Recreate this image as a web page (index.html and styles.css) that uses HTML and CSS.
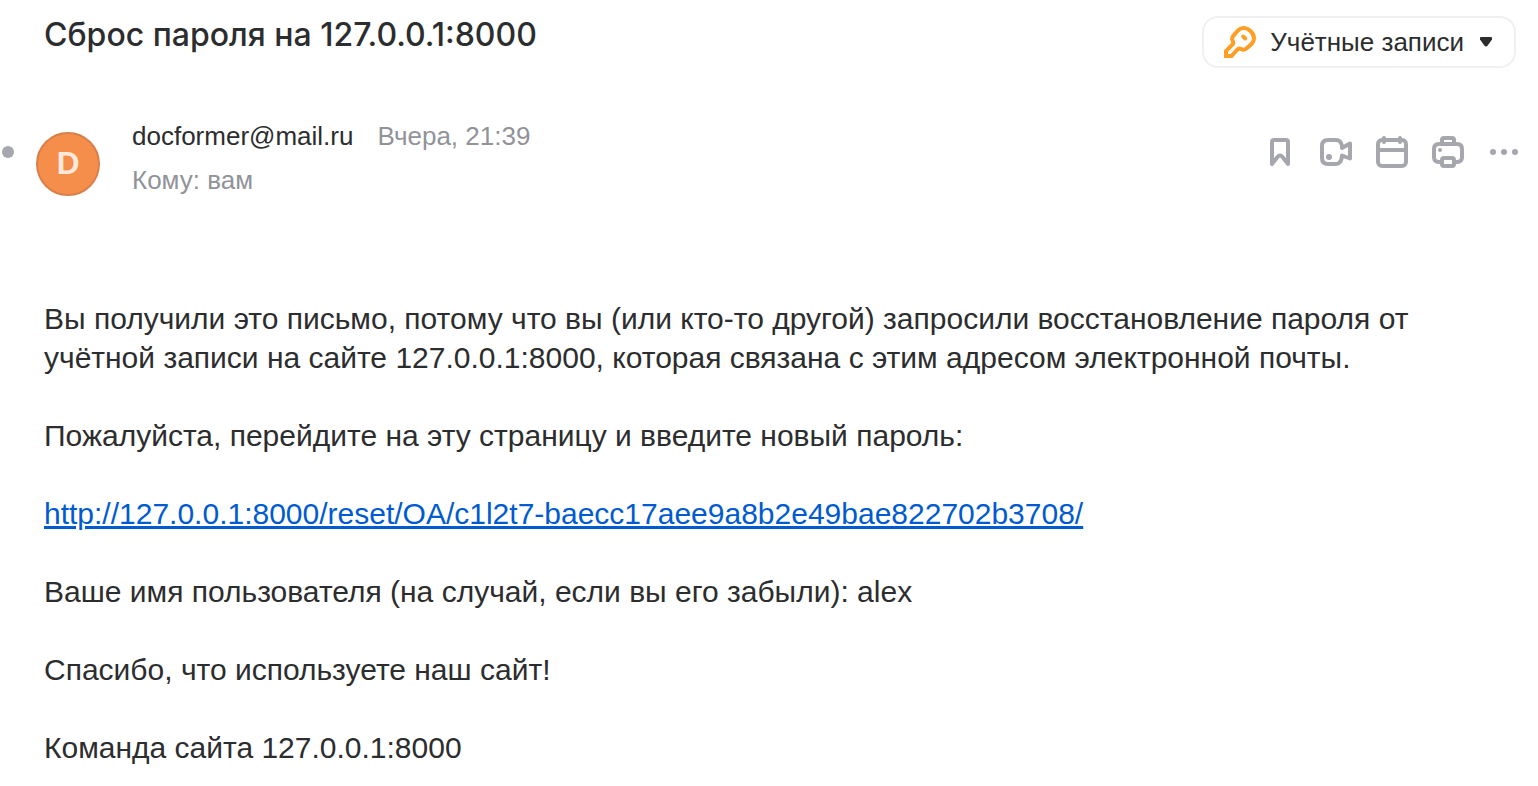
FILE: index.html
```html
<!DOCTYPE html>
<html lang="ru">
<head>
<meta charset="utf-8">
<title>Сброс пароля на 127.0.0.1:8000</title>
<link rel="stylesheet" href="styles.css">
</head>
<body>
<main class="letter">
  <header class="topbar">
    <h1 class="subject">Сброс пароля на 127.0.0.1:8000</h1>
    <button class="category" type="button">
      <svg class="icon" viewBox="0 0 32 32" fill="none" stroke="#ff9e24" stroke-width="4" stroke-linejoin="round" aria-hidden="true">
        <path d="M2 30V25L9 18C9.800 17 9.300 16.300 8.500 14.500C7.800 12.500 8 11 9.500 9.500L14 4.500C17.500 1 22.500 1.200 26.500 5C31 9.500 31 14.500 27 18.500L22.500 22.500C20.500 24 19 24 17 23C15.500 22.300 14.500 22.500 13.500 23.500L7.500 30Z" stroke-linejoin="miter"/>
        <path d="M19.200 10.500L21.200 12.500" stroke-linecap="round"/>
      </svg>
      <span>Учётные записи</span>
      <svg class="caret" viewBox="0 0 12 10" aria-hidden="true"><path d="M1 0H11Q12 0 12 1V2.500L7.500 8.800Q6 10 4.500 8.800L0 2.500V1Q0 0 1 0Z" fill="#2c2d2e"/></svg>
    </button>
  </header>

  <section class="meta">
    <span class="unread"></span>
    <span class="avatar">D</span>
    <div class="people">
      <div class="line"><span class="sender">docformer@mail.ru</span><time class="date">Вчера, 21:39</time></div>
      <div class="line">Кому: вам</div>
    </div>
    <div class="actions">
      <button class="action" type="button" aria-label="Закладка">
        <svg class="icon" viewBox="0 0 32 32" fill="none" stroke="#a5a7ad" stroke-width="4" stroke-linejoin="round"><path d="M8 28V6Q8 4 10 4H22Q24 4 24 6V28L18.500 21Q16 18 13.500 21Z"/></svg>
      </button>
      <button class="action" type="button" aria-label="Видеозвонок">
        <svg class="icon" viewBox="0 0 32 32" fill="none" stroke="#a5a7ad" stroke-width="4" stroke-linejoin="round"><path d="M8 4H16Q21 4 22 10V12L30 7.500V22.500L22 19.500Q21.500 28 16 28H8Q2 28 2 22V10Q2 4 8 4Z"/><circle cx="9" cy="21" r="3" fill="#a5a7ad" stroke="none"/></svg>
      </button>
      <button class="action" type="button" aria-label="Календарь">
        <svg class="icon" viewBox="0 0 32 32" fill="none" stroke="#a5a7ad" stroke-width="4" stroke-linejoin="round"><rect x="2" y="4" width="28" height="26" rx="4"/><path d="M2 14H30"/><path d="M8 2V6M24 2V6" stroke-linecap="round"/></svg>
      </button>
      <button class="action" type="button" aria-label="Печать">
        <svg class="icon" viewBox="0 0 32 32" fill="none" stroke="#a5a7ad" stroke-width="4" stroke-linejoin="round"><path d="M10 8V4Q10 2 12 2H20Q22 2 22 4V8M10 26H7Q2 26 2 21V13Q2 8 7 8H25Q30 8 30 13V21Q30 26 25 26H22"/><rect x="10" y="22" width="12" height="8" rx="2"/><circle cx="8" cy="14" r="2" fill="#a5a7ad" stroke="none"/></svg>
      </button>
      <button class="action" type="button" aria-label="Ещё">
        <svg class="icon" viewBox="0 0 32 32" fill="#a5a7ad"><circle cx="5" cy="16" r="3"/><circle cx="16" cy="16" r="3"/><circle cx="27" cy="16" r="3"/></svg>
      </button>
    </div>
  </section>

  <article class="body">
    <p>Вы получили это письмо, потому что вы (или кто-то другой) запросили восстановление пароля от учётной записи на сайте 127.0.0.1:8000, которая связана с этим адресом электронной почты.</p>
    <p>Пожалуйста, перейдите на эту страницу и введите новый пароль:</p>
    <p><a class="link" href="http://127.0.0.1:8000/reset/OA/c1l2t7-baecc17aee9a8b2e49bae822702b3708/">http://127.0.0.1:8000/reset/OA/c1l2t7-baecc17aee9a8b2e49bae822702b3708/</a></p>
    <p>Ваше имя пользователя (на случай, если вы его забыли): alex</p>
    <p>Спасибо, что используете наш сайт!</p>
    <p>Команда сайта 127.0.0.1:8000</p>
  </article>
</main>
</body>
</html>
```
FILE: styles.css
```css
* { box-sizing: border-box; }
body {
  margin: 0;
  background: #fff;
  color: #2c2d2e;
  font-family: "Liberation Sans", Arial, sans-serif;
}
button { font: inherit; color: inherit; background: none; border: 0; padding: 0; }
.icon { display: block; width: 32px; height: 32px; flex: none; }
.topbar {
  display: flex;
  justify-content: space-between;
  align-items: flex-start;
  padding: 16px 22px 0 44px;
}
.subject {
  margin: 0;
  font: 500 32px/38px Inter, sans-serif;
}
.category {
  display: flex;
  align-items: center;
  height: 52px;
  padding: 0 22px 0 20px;
  border: 2px solid #f0f0f0;
  border-radius: 16px;
  font-size: 26px;
  line-height: 32px;
}
.category span { margin: 0 16px 0 14px; }
.caret { width: 12px; height: 10px; }
.meta {
  display: flex;
  align-items: flex-start;
  padding: 46px 18px 0 2px;
}
.unread {
  width: 12px;
  height: 12px;
  margin: 32px 22px 0 0;
  border-radius: 50%;
  background: #a5a7ad;
}
.avatar {
  width: 64px;
  height: 64px;
  margin: 18px 32px 0 0;
  border: 2px solid #d97f48;
  border-radius: 50%;
  background: #f68e4b;
  color: #feeadd;
  font: 900 30px/56px Lato, sans-serif;
  text-align: center;
}
.people {
  display: grid;
  gap: 12px;
  margin-top: 6px;
  color: #919399;
  font-size: 26px;
  line-height: 32px;
}
.sender { margin-right: 24px; color: #2c2d2e; }
.actions {
  display: flex;
  gap: 24px;
  margin: 22px 0 0 auto;
}
.body {
  padding: 103px 44px 0;
  font-size: 30px;
  line-height: 39px;
}
.body p { margin: 0 0 39px; }
.body p:last-child { margin: 0; }
.link { color: #005bd1; }
```
